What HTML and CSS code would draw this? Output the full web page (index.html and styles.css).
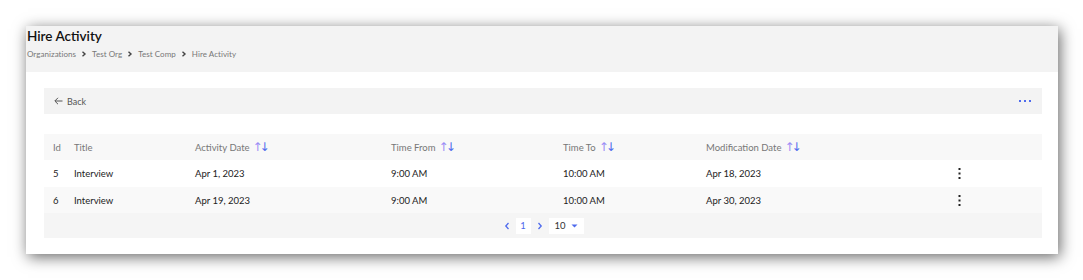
FILE: index.html
```html
<!DOCTYPE html>
<html lang="en">
<head>
    <meta charset="UTF-8">
    <title>Hire Activity</title>
    <link rel="stylesheet" href="styles.css">
</head>
<body>
    <div class="frame">
        <!-- Page header with breadcrumb -->
        <div class="page-head">
            <h1>Hire Activity</h1>
            <div class="crumbs">
                <span>Organizations</span>
                <svg class="chev" width="6" height="6" viewBox="0 0 6 6"><path d="M1.5 0.8 L4 3 L1.5 5.2" fill="none" stroke="#444" stroke-width="1.4"/></svg>
                <span>Test Org</span>
                <svg class="chev" width="6" height="6" viewBox="0 0 6 6"><path d="M1.5 0.8 L4 3 L1.5 5.2" fill="none" stroke="#444" stroke-width="1.4"/></svg>
                <span>Test Comp</span>
                <svg class="chev" width="6" height="6" viewBox="0 0 6 6"><path d="M1.5 0.8 L4 3 L1.5 5.2" fill="none" stroke="#444" stroke-width="1.4"/></svg>
                <span>Hire Activity</span>
            </div>
        </div>

        <div class="content">
            <!-- Toolbar -->
            <div class="toolbar">
                <a class="back">
                    <svg width="9" height="8" viewBox="0 0 9 8"><path d="M8.5 4 H1 M4 0.8 L0.8 4 L4 7.2" fill="none" stroke="#555" stroke-width="1"/></svg>
                    Back
                </a>
                <svg class="more" width="13" height="4" viewBox="0 0 13 4"><rect x="0" y="1" width="2" height="2" fill="#4f6bed"/><rect x="5" y="1" width="2" height="2" fill="#4f6bed"/><rect x="10" y="1" width="2" height="2" fill="#4f6bed"/></svg>
            </div>

            <!-- Table -->
            <div class="grid">
                <div class="row head">
                    <div>Id</div>
                    <div>Title</div>
                    <div class="sort">Activity Date <span class="arrows"><i class="up">&#8593;</i><i class="down">&#8595;</i></span></div>
                    <div class="sort">Time From <span class="arrows"><i class="up">&#8593;</i><i class="down">&#8595;</i></span></div>
                    <div class="sort">Time To <span class="arrows"><i class="up">&#8593;</i><i class="down">&#8595;</i></span></div>
                    <div class="sort">Modification Date <span class="arrows"><i class="up">&#8593;</i><i class="down">&#8595;</i></span></div>
                    <div></div>
                </div>
                <div class="row">
                    <div>5</div>
                    <div>Interview</div>
                    <div>Apr 1, 2023</div>
                    <div>9:00 AM</div>
                    <div>10:00 AM</div>
                    <div>Apr 18, 2023</div>
                    <div class="kebab"><svg width="3" height="11" viewBox="0 0 3 11"><rect x="0.5" y="0" width="2" height="2" fill="#222"/><rect x="0.5" y="4.5" width="2" height="2" fill="#222"/><rect x="0.5" y="9" width="2" height="2" fill="#222"/></svg></div>
                </div>
                <div class="row alt">
                    <div>6</div>
                    <div>Interview</div>
                    <div>Apr 19, 2023</div>
                    <div>9:00 AM</div>
                    <div>10:00 AM</div>
                    <div>Apr 30, 2023</div>
                    <div class="kebab"><svg width="3" height="11" viewBox="0 0 3 11"><rect x="0.5" y="0" width="2" height="2" fill="#222"/><rect x="0.5" y="4.5" width="2" height="2" fill="#222"/><rect x="0.5" y="9" width="2" height="2" fill="#222"/></svg></div>
                </div>
                <div class="pager">
                    <svg class="nav" width="6" height="8" viewBox="0 0 6 8"><path d="M4.5 1 L1.8 4 L4.5 7" fill="none" stroke="#4f6bed" stroke-width="1.3"/></svg>
                    <span class="page">1</span>
                    <svg class="nav" width="6" height="8" viewBox="0 0 6 8"><path d="M1.5 1 L4.2 4 L1.5 7" fill="none" stroke="#4f6bed" stroke-width="1.3"/></svg>
                    <span class="size">10 <svg width="7" height="4" viewBox="0 0 7 4"><path d="M0.5 0.5 H6.5 L3.5 3.5 Z" fill="#4f6bed"/></svg></span>
                </div>
            </div>
        </div>
    </div>
</body>
</html>
```

FILE: styles.css
```css
body {
    margin: 0;
    background: #fff;
    font-family: Lato, "Liberation Sans", sans-serif;
    color: #222;
}
.frame {
    margin: 26px 0 26px 26px;
    width: 1032px;
    height: 228px;
    background: #fff;
    box-shadow: 2px 3px 14px rgba(0, 0, 0, 0.6);
}
.page-head {
    height: 46px;
    background: #f3f3f3;
    padding: 0 0 0 1px;
    box-sizing: border-box;
}
h1 {
    margin: 0;
    padding-top: 2px;
    font-size: 13.5px;
    font-weight: 600;
    line-height: 17px;
    color: #111;
}
.crumbs {
    display: flex;
    align-items: center;
    gap: 5px;
    margin-top: 4px;
    font-size: 8px;
    color: #777;
    letter-spacing: 0.05px;
}
.chev {
    display: block;
}
.content {
    padding: 16px 16px 16px 18px;
}
.toolbar {
    height: 26px;
    background: #f3f3f3;
    display: flex;
    align-items: center;
    justify-content: space-between;
    padding: 0 10px 0 10px;
    margin-bottom: 20px;
}
.back {
    display: flex;
    align-items: center;
    gap: 4px;
    font-size: 9px;
    color: #555;
}
.grid {
    background: #f5f5f5;
    font-size: 9.5px;
}
.row {
    display: grid;
    grid-template-columns: 21px 121px 196px 172px 143px 252px 1fr;
    align-items: center;
    height: 27px;
    padding-left: 9px;
    background: #fff;
    color: #222;
}
.row.head {
    height: 26px;
    background: #f8f8f8;
    color: #777;
}
.row.alt {
    height: 26px;
    background: #f9f9f9;
}
.sort {
    display: flex;
    align-items: center;
    gap: 3px;
}
.arrows {
    display: inline-flex;
    font-size: 12px;
    letter-spacing: -3px;
}
.arrows i {
    font-style: normal;
    font-family: "DejaVu Sans", sans-serif;
}
.arrows .up {
    color: #9a8cf5;
}
.arrows .down {
    color: #4f6bed;
}
.kebab svg {
    display: block;
}
.pager {
    height: 25px;
    display: flex;
    align-items: center;
    justify-content: center;
    gap: 5px;
}
.nav {
    display: block;
    margin: 0 1px;
}
.page {
    background: #fff;
    width: 15px;
    height: 16px;
    line-height: 16px;
    text-align: center;
    color: #4f6bed;
}
.size {
    background: #fff;
    width: 35px;
    height: 16px;
    display: flex;
    align-items: center;
    gap: 5px;
    padding-left: 6px;
    box-sizing: border-box;
    color: #333;
}
```
